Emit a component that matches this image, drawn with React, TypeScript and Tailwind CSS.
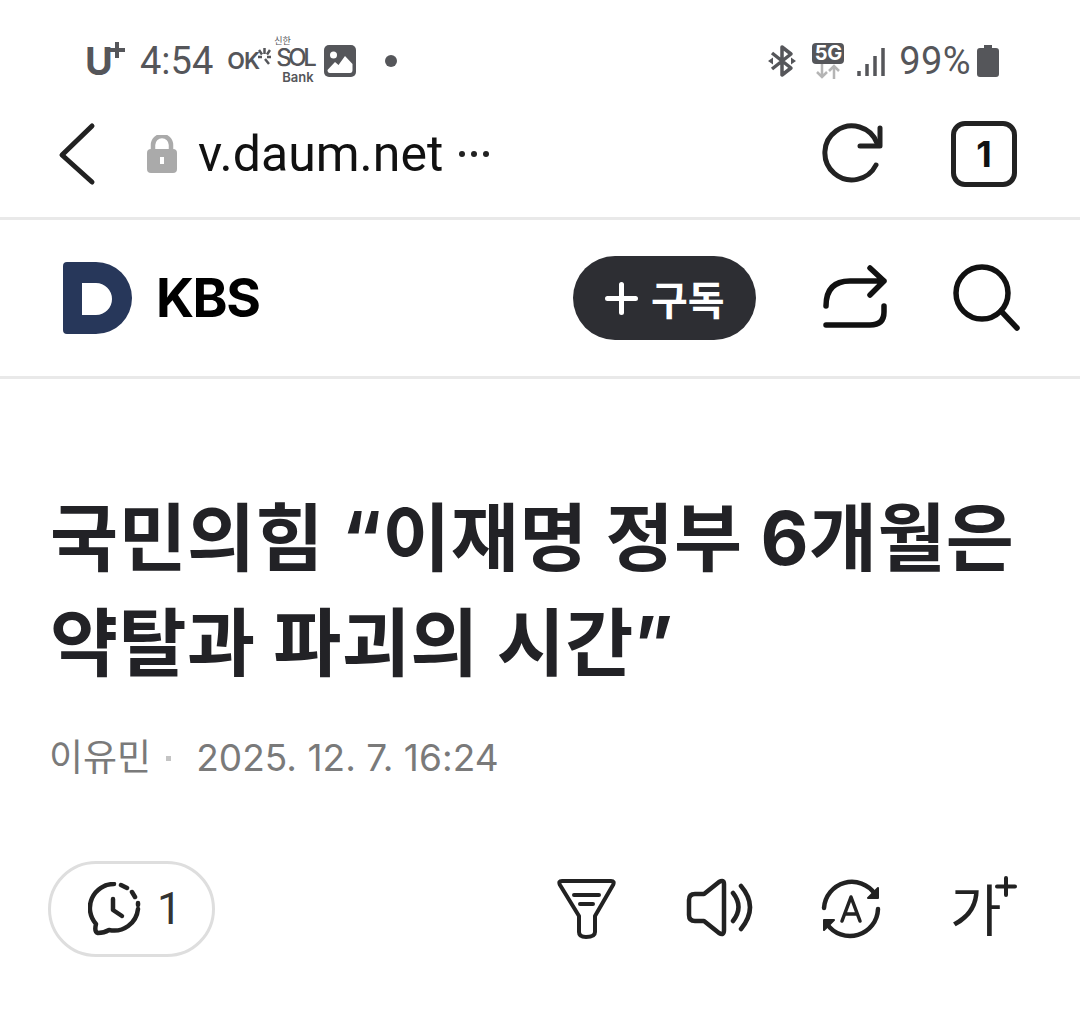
export default function App() {
  return (
    <div className="w-[1080px] h-[1009px] overflow-hidden bg-white font-['Inter','Noto_Sans_CJK_KR',sans-serif]">
      <StatusBar />
      <UrlBar />
      <ChannelBar />

      <main className="px-[50px]">
        <h1 className="mt-[107px] text-[74px] leading-[105px] font-bold tracking-[0.4px] text-[#222226]">
          국민의힘 “이재명 정부 6개월은 약탈과 파괴의 시간”
        </h1>
        <div className="-ml-[1px] mt-[40px] flex items-center text-[37px] leading-[44px] text-[#7a7a7a]">
          <span>이유민</span>
          <span className="ml-[15px] size-[5px] bg-[#c4c4c4]" />
          <span className="ml-[25px] tracking-[0.05px]">2025. 12. 7. 16:24</span>
        </div>

        <div className="mt-[81px] -ml-[2px] mr-[12px] flex items-center justify-between">
          <button className="flex h-[96px] w-[167px] items-center rounded-full border-[3px] border-[#dedede] pl-[37px]">
            <HistoryIcon />
            <span className="ml-[15px] font-['Roboto'] text-[44px] text-[#333]">1</span>
          </button>
          <div className="flex items-center">
            <FunnelIcon />
            <SpeakerIcon />
            <TranslateIcon />
            <div className="relative ml-[68px] h-[64px] w-[68px]">
              <span className="block font-['Noto_Sans_CJK_KR'] text-[56px] leading-[60px] font-normal text-[#222]">가</span>
              <svg className="absolute right-0 -top-[2px]" width="24" height="24" viewBox="0 0 24 24" fill="none" stroke="#222" strokeWidth="4" strokeLinecap="round">
                <path d="M12 3v17M3 11.500h18" />
              </svg>
            </div>
          </div>
        </div>
      </main>
    </div>
  );
}

function StatusBar() {
  return (
    <div className="flex h-[91px] items-center justify-between pl-[85px] pr-[81px] pt-[30px] font-['Roboto'] text-[#55565a]">
      <div className="flex items-center">
        <span className="relative w-[42px] font-['Inter'] text-[38px] leading-[44px] font-bold">
          U
          <svg className="absolute left-[23px] top-[2px]" width="18" height="18" viewBox="0 0 18 18" stroke="#55565a" strokeWidth="4">
            <path d="M9 1v16M1 9h16" />
          </svg>
        </span>
        <span className="ml-[13px] text-[38px] leading-[44px]">4:54</span>
        <OkLogo />
        <SolLogo />
        <svg className="ml-[12px]" width="32" height="32" viewBox="0 0 32 32">
          <rect width="32" height="32" rx="5" fill="#55565a" />
          <circle cx="9.500" cy="10" r="3.500" fill="#fff" />
          <path d="M3.500 25 L11 17 L14.500 20 L21 11 L28.500 19 V25 Q28.500 28 26 28 H6 Q3.500 28 3.500 25 Z" fill="#fff" />
        </svg>
        <span className="ml-[29px] size-[12px] rounded-full bg-[#55565a]" />
      </div>
      <div className="flex items-center">
        <svg width="28" height="34" viewBox="0 0 28 34" fill="none" stroke="#55565a" strokeWidth="3.500" strokeLinejoin="round">
          <path d="M4 9 L23 24 L14 31 V3 L23 10 L4 25" />
          <path d="M0 17 L5 13.500 V20.500 Z M28 17 L23 13.500 V20.500 Z" fill="#55565a" stroke="none" />
        </svg>
        <div className="ml-[16px] flex w-[32px] flex-col items-center">
          <span className="h-[21px] w-[32px] rounded-[4px] bg-[#55565a] text-center font-['Inter'] text-[20px] leading-[21px] font-bold tracking-[-0.5px] text-white">5G</span>
          <svg width="26" height="15" viewBox="0 0 26 15" fill="none" stroke="#b5b5b5" strokeWidth="2.500">
            <path d="M7 0v13M2 8l5 5 5-5M19 15V2M14 7l5-5 5 5" />
          </svg>
        </div>
        <svg className="ml-[13px] mt-[2px]" width="28" height="30" viewBox="0 0 28 30" fill="none" stroke="#55565a" strokeWidth="3.500">
          <path d="M2 24v5M10 17v12M18 9v20M26 1v28" />
        </svg>
        <span className="ml-[14px] text-[38px] leading-[44px] tracking-[0.4px]">99%</span>
        <svg className="ml-[6px]" width="22" height="32" viewBox="0 0 22 32">
          <path d="M7 0h8v3h4q3 0 3 3v23q0 3-3 3H3q-3 0-3-3V6q0-3 3-3h4z" fill="#55565a" />
        </svg>
      </div>
    </div>
  );
}

function OkLogo() {
  return (
    <div className="ml-[14px] flex w-[39px] items-end">
      <span className="font-['Inter'] text-[23px] leading-[24px] font-semibold tracking-[-1px]">OK</span>
      <svg className="-ml-[1px] mb-[8px] shrink-0" width="13" height="17" viewBox="0 0 13 17" stroke="#55565a" strokeWidth="2.500">
        <path d="M6.500 0v6M1 2l3 4.500M12 2L9 6.500M0 9h4M13 9h-4M7 11l4 5" />
      </svg>
    </div>
  );
}

function SolLogo() {
  return (
    <div className="relative ml-[10px] h-[44px] w-[36px]">
      <span className="absolute -left-[2px] -top-[3px] text-[9px] leading-[9px] font-['Noto_Sans_CJK_KR']">신한</span>
      <span className="absolute left-0 top-[10px] font-['Inter'] text-[24px] leading-[18px] font-medium tracking-[-3.5px]">SOL</span>
      <span className="absolute left-[6px] top-[31px] font-['Inter'] text-[13px] leading-[14px] font-semibold">Bank</span>
    </div>
  );
}

function UrlBar() {
  return (
    <div className="flex h-[129px] items-center justify-between border-b-[3px] border-[#e9e9e9] pl-[58px] pr-[63px]">
      <div className="flex items-center">
        <svg width="38" height="64" viewBox="58 122 38 64" fill="none" stroke="#222" strokeWidth="5" strokeLinecap="round" strokeLinejoin="round">
          <path d="M92 126 L62 155 L92 182" />
        </svg>
        <svg className="ml-[51px]" width="30" height="38" viewBox="0 0 30 38">
          <path d="M6 16v-6a9 9 0 0 1 18 0v6" fill="none" stroke="#aaa" strokeWidth="4.500" />
          <rect y="14" width="30" height="24" rx="4" fill="#aaa" />
          <rect x="13" y="22" width="4" height="7" fill="#fff" />
        </svg>
        <span className="ml-[21px] font-['Roboto'] text-[50px] leading-[60px] text-[#111]">v.daum.net</span>
        <div className="ml-[16px] flex gap-[6px]">
          <span className="size-[6px] rounded-full bg-[#222]" />
          <span className="size-[6px] rounded-full bg-[#222]" />
          <span className="size-[6px] rounded-full bg-[#222]" />
        </div>
      </div>
      <div className="flex items-center">
        <svg width="64" height="66" viewBox="820 121 64 66" fill="none" stroke="#222" strokeWidth="5" strokeLinecap="round">
          <path d="M876 165 A27 27 0 1 1 877 143" />
          <path d="M860 146 H880 V128" strokeLinejoin="round" />
        </svg>
        <div className="ml-[67px] flex size-[66px] items-center justify-center rounded-[14px] border-[5px] border-[#222] text-[36px] font-bold text-[#111]">
          1
        </div>
      </div>
    </div>
  );
}

function ChannelBar() {
  return (
    <div className="flex h-[159px] items-center justify-between border-b-[3px] border-[#e9e9e9] pl-[63px] pr-[58px]">
      <div className="flex items-center">
        <svg width="69" height="72" viewBox="63 262 69 72">
          <path
            fillRule="evenodd"
            fill="#27375a"
            d="M63 266 Q63 262 67 262 H96 A36 36 0 0 1 96 334 H67 Q63 334 63 330 Z M82 283 V315 H96 A16 16 0 0 0 96 283 Z"
          />
        </svg>
        <span className="ml-[24px] text-[53px] leading-[64px] font-bold tracking-[-1.5px] text-black">KBS</span>
      </div>
      <div className="flex items-center">
        <button className="flex h-[84px] w-[183px] items-center rounded-full bg-[#2d2e33] pl-[32px]">
          <svg width="33" height="33" viewBox="0 0 33 33" fill="none" stroke="#fff" strokeWidth="5" strokeLinecap="round">
            <path d="M16.500 2.500v28M2.500 16.500h28" />
          </svg>
          <span className="ml-[13px] font-['Noto_Sans_CJK_KR'] text-[40px] leading-[44px] font-bold text-white">구독</span>
        </button>
        <svg className="ml-[64px]" width="70" height="66" viewBox="820 265 70 66" fill="none" stroke="#111" strokeWidth="5.500" strokeLinecap="round" strokeLinejoin="round">
          <path d="M826 306 Q826 281 850 281 H884 M870 268 L884 281 L870 295" />
          <path d="M884 306 V312 Q884 325 870 325 H826" />
        </svg>
        <svg className="ml-[62px]" width="70" height="70" viewBox="952 263 70 70" fill="none" stroke="#111" strokeWidth="5.500" strokeLinecap="round">
          <circle cx="982" cy="293" r="26" />
          <path d="M1001 311 L1017 328" />
        </svg>
      </div>
    </div>
  );
}

function HistoryIcon() {
  return (
    <svg width="54" height="54" viewBox="87 883 54 54" fill="none" stroke="#222" strokeWidth="4.500" strokeLinecap="round" strokeLinejoin="round">
      <path d="M113 885 A24 24 0 0 0 95 925 Q93 933 97 934 Q103 934 108 931 A24 24 0 0 0 137 910" />
      <path d="M120 886 L126 889 M131 893 L134 898 M137 904 V906" />
      <path d="M112 900 V911 L121 917" />
    </svg>
  );
}

function FunnelIcon() {
  return (
    <svg width="60" height="62" viewBox="557 878 60 62" fill="none" stroke="#222" strokeWidth="4" strokeLinecap="round" strokeLinejoin="round">
      <path d="M563 881 H612 Q616 881 614 885 L596 916 V932 Q596 937 587 937 Q580 937 580 932 V916 L561 885 Q559 881 563 881 Z" />
      <path d="M575 895 H600 M581 904 H594" />
    </svg>
  );
}

function SpeakerIcon() {
  return (
    <svg className="ml-[70px]" width="68" height="62" viewBox="687 878 68 62" fill="none" stroke="#222" strokeWidth="4.500" strokeLinecap="round" strokeLinejoin="round">
      <path d="M705 894 L720 882 Q725 879 725 884 V930 Q725 936 720 933 L705 921 H696 Q690 921 690 915 V900 Q690 894 696 894 Z" />
      <path d="M734 893 Q745 907 734 921 M742 886 Q760 907 742 929" />
    </svg>
  );
}

function TranslateIcon() {
  return (
    <svg className="ml-[66px]" width="62" height="62" viewBox="821 877 62 62" fill="none" stroke="#222" strokeWidth="4.500" strokeLinecap="round" strokeLinejoin="round">
      <path d="M825 907 A28 28 0 0 1 876 893" />
      <path d="M879 908 A28 28 0 0 1 828 923" />
      <path d="M879 887 V897 H869 Z M825 929 V919 H835 Z" fill="#222" strokeWidth="2" />
      <path d="M843 920 L852 896 L861 920 M846 913 H858" strokeWidth="3.500" />
    </svg>
  );
}
